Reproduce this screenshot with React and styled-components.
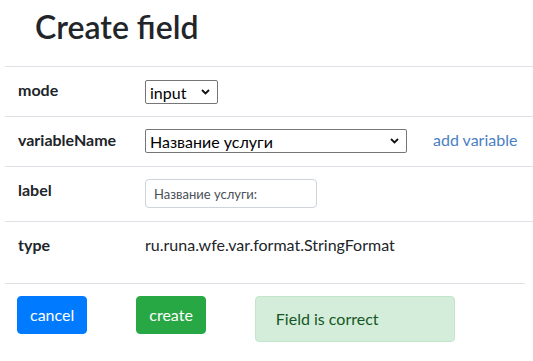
import React from "react";
import styled, { createGlobalStyle } from "styled-components";

const GlobalStyle = createGlobalStyle`
  body {
    margin: 0;
    background: #fff;
    color: #212529;
    font-family: Lato, "Noto Sans", sans-serif;
    font-size: 16px;
    line-height: 24px;
  }
  * { box-sizing: border-box; }
`;

const Page = styled.div`
  width: 533px;
  overflow: hidden;
`;

const Title = styled.h2`
  margin: 0;
  height: 66px;
  padding: 8px 0 0 35px;
  font-size: 32px;
  line-height: 38px;
  font-weight: 600;
  color: #212529;
`;

const Table = styled.div`
  margin-left: 5px;
`;

const Row = styled.div`
  display: grid;
  grid-template-columns: 127px 288px auto;
  align-items: start;
  height: ${(p) => p.h}px;
  padding: 11px 0 0 13px;
  border-top: 1px solid #dee2e6;
`;

const Label = styled.div`
  font-weight: 700;
  white-space: nowrap;
`;

const Value = styled.div`
  white-space: nowrap;
`;

const chevron =
  "data:image/svg+xml;utf8," +
  encodeURIComponent(
    '<svg xmlns="http://www.w3.org/2000/svg" width="9" height="6" viewBox="0 0 9 6"><path d="M1 1 L4.5 4.5 L8 1" fill="none" stroke="#111" stroke-width="1.8"/></svg>'
  );

const Select = styled.select`
  appearance: none;
  -webkit-appearance: none;
  display: block;
  width: ${(p) => p.w}px;
  height: 24px;
  margin-top: ${(p) => p.mt}px;
  padding: 0 20px 0 4px;
  border: 1px solid #767676;
  border-radius: 2px;
  background: #fff url("${chevron}") no-repeat right 7px center;
  font-family: Lato, "Noto Sans", sans-serif;
  font-size: 16px;
  color: #000;
`;

const Input = styled.input`
  display: block;
  width: 172px;
  height: 29px;
  margin-top: 1px;
  padding: 0 8px;
  border: 1px solid #ced4da;
  border-radius: 4px;
  font-family: Lato, "Noto Sans", sans-serif;
  font-size: 13px;
  color: #495057;
  &::placeholder { color: #495057; }
`;

const Link = styled.a`
  color: #4a80c2;
  text-decoration: none;
  white-space: nowrap;
`;

const Footer = styled.div`
  display: flex;
  align-items: flex-start;
  gap: 49px;
  width: 520px;
  margin-left: 5px;
  padding: 12px 0 0 12px;
  border-top: 1px solid #dee2e6;
`;

const Button = styled.button`
  height: 38px;
  padding: 6px 12px;
  border: 1px solid ${(p) => p.bg};
  border-radius: 4px;
  background: ${(p) => p.bg};
  color: #fff;
  font-family: Lato, "Noto Sans", sans-serif;
  font-size: 16px;
  line-height: 24px;
`;

const Alert = styled.div`
  width: 200px;
  height: 46px;
  padding: 10px 20px;
  border: 1px solid #c3e6cb;
  border-radius: 4px;
  background: #d4edda;
  color: #155724;
`;

export default function App() {
  return (
    <Page>
      <GlobalStyle />
      <Title>Create field</Title>
      <Table>
        <Row h={50}>
          <Label>mode</Label>
          <Select w={73} mt={2} defaultValue="input">
            <option value="input">input</option>
          </Select>
        </Row>
        <Row h={50}>
          <Label>variableName</Label>
          <Select w={262} mt={1} defaultValue="s">
            <option value="s">Название услуги</option>
          </Select>
          <Link href="#">add variable</Link>
        </Row>
        <Row h={55}>
          <Label>label</Label>
          <Input defaultValue="Название услуги:" />
        </Row>
        <Row h={62}>
          <Label>type</Label>
          <Value>ru.runa.wfe.var.format.StringFormat</Value>
        </Row>
      </Table>
      <Footer>
        <Button bg="#007bff">cancel</Button>
        <Button bg="#28a745">create</Button>
        <Alert>Field is correct</Alert>
      </Footer>
    </Page>
  );
}
